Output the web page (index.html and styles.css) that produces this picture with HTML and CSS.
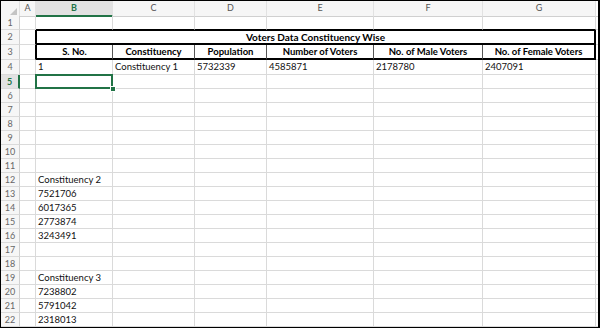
FILE: index.html
```html
<!DOCTYPE html>
<html>
<head>
    <title>Voters Data Constituency Wise</title>
    <link rel="stylesheet" href="styles.css">
</head>
<body>
    <div class="frame">
        <div class="row head">
            <div class="c corner"><span class="tri"></span></div>
            <div class="c ch">A</div>
            <div class="c ch sel">B</div>
            <div class="c ch">C</div>
            <div class="c ch">D</div>
            <div class="c ch">E</div>
            <div class="c ch">F</div>
            <div class="c ch">G</div>
            <div class="c fill"></div>
        </div>

        <div class="row">
            <div class="c rh">1</div>
            <div class="c"></div>
            <div class="c above"></div><div class="c above"></div><div class="c above"></div>
            <div class="c above"></div><div class="c above"></div><div class="c above"></div>
            <div class="c fill"></div>
        </div>

        <div class="row tall">
            <div class="c rh">2</div>
            <div class="c edge"></div>
            <div class="c title">Voters Data Constituency Wise</div>
            <div class="c fill"></div>
        </div>

        <div class="row tall">
            <div class="c rh">3</div>
            <div class="c edge"></div>
            <div class="c th first">S. No.</div>
            <div class="c th">Constituency</div>
            <div class="c th">Population</div>
            <div class="c th">Number of Voters</div>
            <div class="c th">No. of Male Voters</div>
            <div class="c th last">No. of Female Voters</div>
            <div class="c fill"></div>
        </div>

        <div class="row tall">
            <div class="c rh">4</div>
            <div class="c"></div>
            <div class="c">1</div>
            <div class="c">Constituency 1</div>
            <div class="c">5732339</div>
            <div class="c">4585871</div>
            <div class="c">2178780</div>
            <div class="c">2407091</div>
            <div class="c fill"></div>
        </div>

        <div class="row">
            <div class="c rh on">5</div>
            <div class="c"></div>
            <div class="c active"><span class="handle"></span></div>
            <div class="c"></div><div class="c"></div><div class="c"></div><div class="c"></div><div class="c"></div>
            <div class="c fill"></div>
        </div>

        <div class="row"><div class="c rh">6</div><div class="c"></div><div class="c"></div><div class="c"></div><div class="c"></div><div class="c"></div><div class="c"></div><div class="c"></div><div class="c fill"></div></div>
        <div class="row"><div class="c rh">7</div><div class="c"></div><div class="c"></div><div class="c"></div><div class="c"></div><div class="c"></div><div class="c"></div><div class="c"></div><div class="c fill"></div></div>
        <div class="row"><div class="c rh">8</div><div class="c"></div><div class="c"></div><div class="c"></div><div class="c"></div><div class="c"></div><div class="c"></div><div class="c"></div><div class="c fill"></div></div>
        <div class="row"><div class="c rh">9</div><div class="c"></div><div class="c"></div><div class="c"></div><div class="c"></div><div class="c"></div><div class="c"></div><div class="c"></div><div class="c fill"></div></div>
        <div class="row"><div class="c rh">10</div><div class="c"></div><div class="c"></div><div class="c"></div><div class="c"></div><div class="c"></div><div class="c"></div><div class="c"></div><div class="c fill"></div></div>
        <div class="row"><div class="c rh">11</div><div class="c"></div><div class="c"></div><div class="c"></div><div class="c"></div><div class="c"></div><div class="c"></div><div class="c"></div><div class="c fill"></div></div>
        <div class="row"><div class="c rh">12</div><div class="c"></div><div class="c">Constituency 2</div><div class="c"></div><div class="c"></div><div class="c"></div><div class="c"></div><div class="c"></div><div class="c fill"></div></div>
        <div class="row"><div class="c rh">13</div><div class="c"></div><div class="c">7521706</div><div class="c"></div><div class="c"></div><div class="c"></div><div class="c"></div><div class="c"></div><div class="c fill"></div></div>
        <div class="row"><div class="c rh">14</div><div class="c"></div><div class="c">6017365</div><div class="c"></div><div class="c"></div><div class="c"></div><div class="c"></div><div class="c"></div><div class="c fill"></div></div>
        <div class="row"><div class="c rh">15</div><div class="c"></div><div class="c">2773874</div><div class="c"></div><div class="c"></div><div class="c"></div><div class="c"></div><div class="c"></div><div class="c fill"></div></div>
        <div class="row"><div class="c rh">16</div><div class="c"></div><div class="c">3243491</div><div class="c"></div><div class="c"></div><div class="c"></div><div class="c"></div><div class="c"></div><div class="c fill"></div></div>
        <div class="row"><div class="c rh">17</div><div class="c"></div><div class="c"></div><div class="c"></div><div class="c"></div><div class="c"></div><div class="c"></div><div class="c"></div><div class="c fill"></div></div>
        <div class="row"><div class="c rh">18</div><div class="c"></div><div class="c"></div><div class="c"></div><div class="c"></div><div class="c"></div><div class="c"></div><div class="c"></div><div class="c fill"></div></div>
        <div class="row"><div class="c rh">19</div><div class="c"></div><div class="c">Constituency 3</div><div class="c"></div><div class="c"></div><div class="c"></div><div class="c"></div><div class="c"></div><div class="c fill"></div></div>
        <div class="row"><div class="c rh">20</div><div class="c"></div><div class="c">7238802</div><div class="c"></div><div class="c"></div><div class="c"></div><div class="c"></div><div class="c"></div><div class="c fill"></div></div>
        <div class="row"><div class="c rh">21</div><div class="c"></div><div class="c">5791042</div><div class="c"></div><div class="c"></div><div class="c"></div><div class="c"></div><div class="c"></div><div class="c fill"></div></div>
        <div class="row"><div class="c rh">22</div><div class="c"></div><div class="c">2318013</div><div class="c"></div><div class="c"></div><div class="c"></div><div class="c"></div><div class="c"></div><div class="c fill"></div></div>
    </div>
</body>
</html>
```

FILE: styles.css
```css
body { margin: 0; background: #fff; font-family: Lato, "Liberation Sans", sans-serif; }

.frame {
    width: 600px;
    height: 328px;
    box-sizing: border-box;
    border: 1px solid #000;
    border-right-width: 2px;
    overflow: hidden;
    background: #fff;
}

.row {
    display: grid;
    grid-template-columns: 19px 16px 77px 82px 72px 107px 109px 113px 1fr;
    height: 14px;
}
.row.head { height: 15px; }
.row.tall { height: 15px; }

.c {
    box-sizing: border-box;
    border-right: 1px solid #dadada;
    border-bottom: 1px solid #dadada;
    padding: 0 2px;
    font-size: 9.5px;
    line-height: 13px;
    color: #111;
    white-space: nowrap;
    position: relative;
}
.c.fill { border-right: none; }

/* column + row headers */
.head .c { background: #f6f6f6; color: #555; text-align: center; font-size: 9px; line-height: 14px; border-right-color: #e2e2e2; border-bottom-color: #d0d0d0; }
.head .fill { background: #fff; }
.ch.sel { background: #e2e2e2; color: #217346; font-weight: bold; border-bottom: 2px solid #217346; }
.corner .tri {
    position: absolute;
    right: 2px;
    bottom: 1px;
    width: 0;
    height: 0;
    border-left: 7px solid transparent;
    border-bottom: 7px solid #c4c4c4;
}
.rh { background: #f6f6f6; color: #666; text-align: center; font-size: 9px; padding: 0; border-right-color: #d0d0d0; }
.rh.on { background: #e2e2e2; color: #217346; font-weight: bold; border-right: 2px solid #217346; }

/* table block B2:G3 */
.above { border-bottom-color: #000; }
.edge { border-right-color: #000; }
.title {
    grid-column: span 6;
    border: 2px solid #000;
    border-top: 1px solid #000;
    border-left: 1px solid #000;
    text-align: center;
    font-weight: bold;
    font-size: 10px;
    line-height: 12px;
    color: #000;
}
.th {
    text-align: center;
    font-weight: bold;
    color: #000;
    border-right-color: #555;
    border-bottom: 2px solid #000;
    line-height: 13px;
}
.th.first { border-left: 1px solid #000; }
.th.last { border-right: 2px solid #000; }

/* active cell */
.active::after {
    content: "";
    position: absolute;
    left: -1px;
    top: -1px;
    right: -1px;
    bottom: -1px;
    border: 2px solid #217346;
}
.handle {
    position: absolute;
    right: -4px;
    bottom: -4px;
    width: 4px;
    height: 4px;
    background: #217346;
    border: 1px solid #fff;
    z-index: 1;
}
```
